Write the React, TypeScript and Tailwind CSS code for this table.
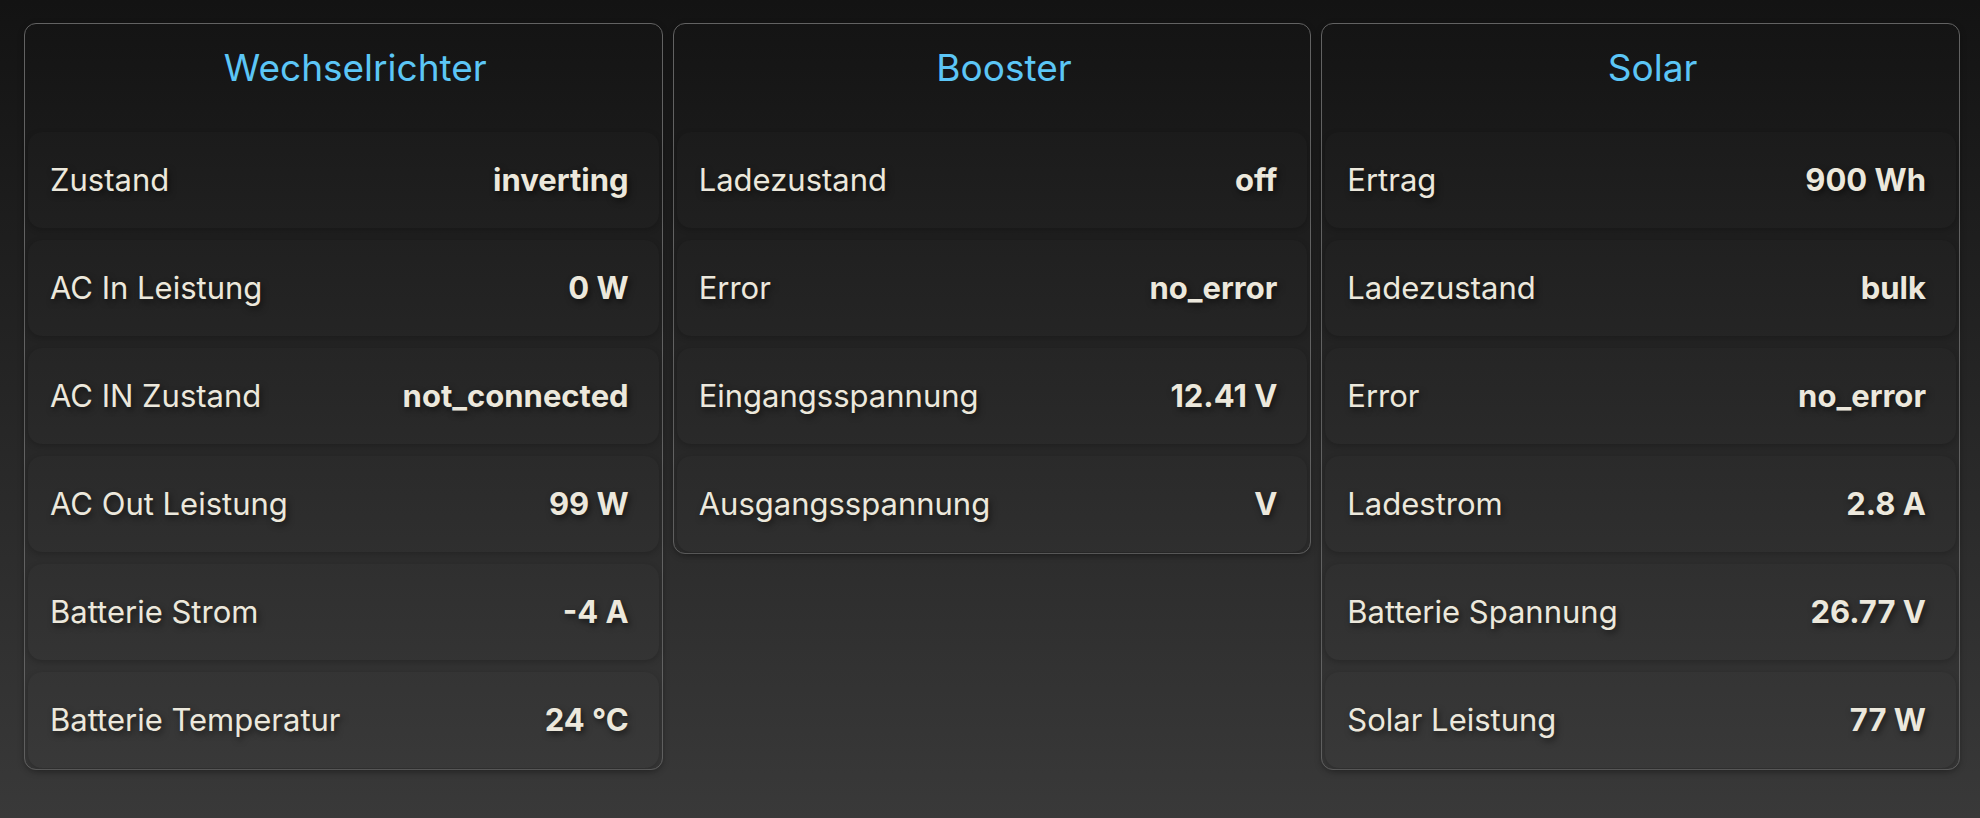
type Row = { label: string; value: string };

type Panel = { title: string; rows: Row[] };

const panels: Panel[] = [
  {
    title: "Wechselrichter",
    rows: [
      { label: "Zustand", value: "inverting" },
      { label: "AC In Leistung", value: "0 W" },
      { label: "AC IN Zustand", value: "not_connected" },
      { label: "AC Out Leistung", value: "99 W" },
      { label: "Batterie Strom", value: "-4 A" },
      { label: "Batterie Temperatur", value: "24 °C" },
    ],
  },
  {
    title: "Booster",
    rows: [
      { label: "Ladezustand", value: "off" },
      { label: "Error", value: "no_error" },
      { label: "Eingangsspannung", value: "12.41 V" },
      { label: "Ausgangsspannung", value: "V" },
    ],
  },
  {
    title: "Solar",
    rows: [
      { label: "Ertrag", value: "900 Wh" },
      { label: "Ladezustand", value: "bulk" },
      { label: "Error", value: "no_error" },
      { label: "Ladestrom", value: "2.8 A" },
      { label: "Batterie Spannung", value: "26.77 V" },
      { label: "Solar Leistung", value: "77 W" },
    ],
  },
];

function StatRow({ label, value }: Row) {
  return (
    <div className="flex h-[96px] items-center justify-between rounded-[14px] bg-white/[0.01] pl-[22px] pr-[30px] shadow-[0_2px_6px_rgba(0,0,0,0.2)]">
      <span className="text-[31px] text-[#ece8dc] [text-shadow:2px_3px_6px_rgba(0,0,0,0.55)]">
        {label}
      </span>
      <span className="text-[31px] font-bold text-[#ece8dc] [text-shadow:2px_3px_6px_rgba(0,0,0,0.55)]">
        {value}
      </span>
    </div>
  );
}

function PanelCard({ title, rows }: Panel) {
  return (
    <div className="rounded-[12px] border border-[#626262] pb-[1px] shadow-[0_2px_6px_rgba(0,0,0,0.25)]">
      <div className="h-[108px] pl-[24px] pt-[26px] text-center text-[37px] leading-[36px] text-[#5cc6f6]">
        {title}
      </div>
      <div className="flex flex-col gap-[12px] px-[3px]">
        {rows.map((r) => (
          <StatRow key={r.label} {...r} />
        ))}
      </div>
    </div>
  );
}

export default function App() {
  return (
    <div className="min-h-screen bg-[linear-gradient(to_bottom,#131313,#393939)] pl-[24px] pr-[20px] pt-[23px] font-['Inter','Liberation_Sans',sans-serif]">
      <div className="grid grid-cols-3 items-start gap-[10px]">
        {panels.map((p) => (
          <PanelCard key={p.title} {...p} />
        ))}
      </div>
    </div>
  );
}
